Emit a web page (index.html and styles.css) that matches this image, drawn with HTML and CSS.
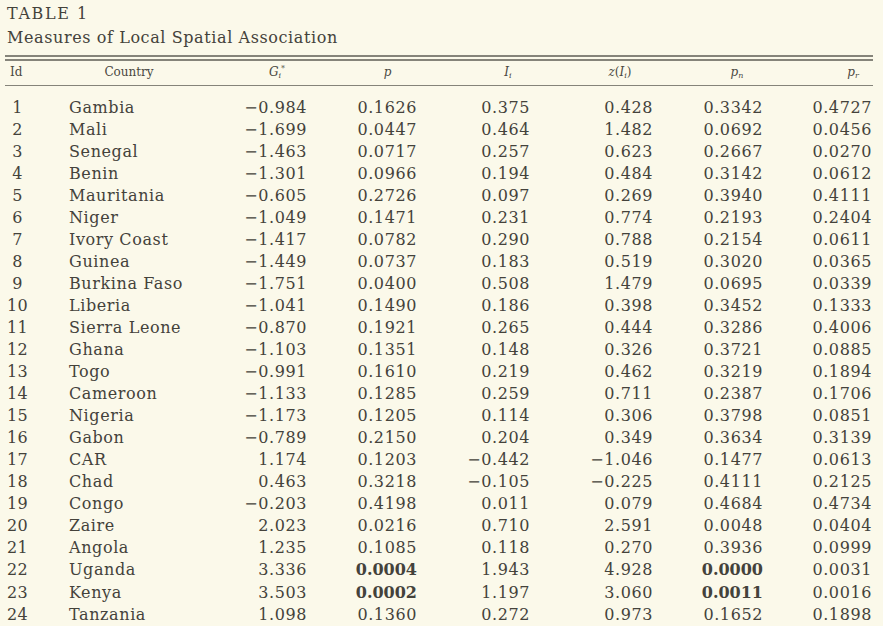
FILE: index.html
```html
<!DOCTYPE html>
<html lang="en">
<head>
<meta charset="utf-8">
<title>Table 1 – Measures of Local Spatial Association</title>
<link rel="stylesheet" href="styles.css">
</head>
<body>
<div class="page">
  <div class="caption">
    <div class="label">TABLE 1</div>
    <div class="title">Measures of Local Spatial Association</div>
  </div>
  <table class="data">
    <colgroup>
      <col class="c-id"><col class="c-country"><col class="c-g"><col class="c-p">
      <col class="c-i"><col class="c-z"><col class="c-pn"><col class="c-pr">
    </colgroup>
    <thead>
      <tr>
        <th class="h-id">Id</th>
        <th class="h-country">Country</th>
        <th class="h-g"><i>G</i><sub><i>i</i></sub><sup class="star">*</sup></th>
        <th class="h-p"><i>p</i></th>
        <th class="h-i"><i>I</i><sub><i>i</i></sub></th>
        <th class="h-z"><i>z</i>(<i>I</i><sub><i>i</i></sub>)</th>
        <th class="h-pn"><i>p</i><sub><i>n</i></sub></th>
        <th class="h-pr"><i>p</i><sub><i>r</i></sub></th>
      </tr>
    </thead>
    <tbody>
      <tr><td>1</td><td>Gambia</td><td>−0.984</td><td>0.1626</td><td>0.375</td><td>0.428</td><td>0.3342</td><td>0.4727</td></tr>
      <tr><td>2</td><td>Mali</td><td>−1.699</td><td>0.0447</td><td>0.464</td><td>1.482</td><td>0.0692</td><td>0.0456</td></tr>
      <tr><td>3</td><td>Senegal</td><td>−1.463</td><td>0.0717</td><td>0.257</td><td>0.623</td><td>0.2667</td><td>0.0270</td></tr>
      <tr><td>4</td><td>Benin</td><td>−1.301</td><td>0.0966</td><td>0.194</td><td>0.484</td><td>0.3142</td><td>0.0612</td></tr>
      <tr><td>5</td><td>Mauritania</td><td>−0.605</td><td>0.2726</td><td>0.097</td><td>0.269</td><td>0.3940</td><td>0.4111</td></tr>
      <tr><td>6</td><td>Niger</td><td>−1.049</td><td>0.1471</td><td>0.231</td><td>0.774</td><td>0.2193</td><td>0.2404</td></tr>
      <tr><td>7</td><td>Ivory Coast</td><td>−1.417</td><td>0.0782</td><td>0.290</td><td>0.788</td><td>0.2154</td><td>0.0611</td></tr>
      <tr><td>8</td><td>Guinea</td><td>−1.449</td><td>0.0737</td><td>0.183</td><td>0.519</td><td>0.3020</td><td>0.0365</td></tr>
      <tr><td>9</td><td>Burkina Faso</td><td>−1.751</td><td>0.0400</td><td>0.508</td><td>1.479</td><td>0.0695</td><td>0.0339</td></tr>
      <tr><td>10</td><td>Liberia</td><td>−1.041</td><td>0.1490</td><td>0.186</td><td>0.398</td><td>0.3452</td><td>0.1333</td></tr>
      <tr><td>11</td><td>Sierra Leone</td><td>−0.870</td><td>0.1921</td><td>0.265</td><td>0.444</td><td>0.3286</td><td>0.4006</td></tr>
      <tr><td>12</td><td>Ghana</td><td>−1.103</td><td>0.1351</td><td>0.148</td><td>0.326</td><td>0.3721</td><td>0.0885</td></tr>
      <tr><td>13</td><td>Togo</td><td>−0.991</td><td>0.1610</td><td>0.219</td><td>0.462</td><td>0.3219</td><td>0.1894</td></tr>
      <tr><td>14</td><td>Cameroon</td><td>−1.133</td><td>0.1285</td><td>0.259</td><td>0.711</td><td>0.2387</td><td>0.1706</td></tr>
      <tr><td>15</td><td>Nigeria</td><td>−1.173</td><td>0.1205</td><td>0.114</td><td>0.306</td><td>0.3798</td><td>0.0851</td></tr>
      <tr><td>16</td><td>Gabon</td><td>−0.789</td><td>0.2150</td><td>0.204</td><td>0.349</td><td>0.3634</td><td>0.3139</td></tr>
      <tr><td>17</td><td>CAR</td><td>1.174</td><td>0.1203</td><td>−0.442</td><td>−1.046</td><td>0.1477</td><td>0.0613</td></tr>
      <tr><td>18</td><td>Chad</td><td>0.463</td><td>0.3218</td><td>−0.105</td><td>−0.225</td><td>0.4111</td><td>0.2125</td></tr>
      <tr><td>19</td><td>Congo</td><td>−0.203</td><td>0.4198</td><td>0.011</td><td>0.079</td><td>0.4684</td><td>0.4734</td></tr>
      <tr><td>20</td><td>Zaire</td><td>2.023</td><td>0.0216</td><td>0.710</td><td>2.591</td><td>0.0048</td><td>0.0404</td></tr>
      <tr><td>21</td><td>Angola</td><td>1.235</td><td>0.1085</td><td>0.118</td><td>0.270</td><td>0.3936</td><td>0.0999</td></tr>
      <tr><td>22</td><td>Uganda</td><td>3.336</td><td class="sig">0.0004</td><td>1.943</td><td>4.928</td><td class="sig">0.0000</td><td>0.0031</td></tr>
      <tr><td>23</td><td>Kenya</td><td>3.503</td><td class="sig">0.0002</td><td>1.197</td><td>3.060</td><td class="sig">0.0011</td><td>0.0016</td></tr>
      <tr><td>24</td><td>Tanzania</td><td>1.098</td><td>0.1360</td><td>0.272</td><td>0.973</td><td>0.1652</td><td>0.1898</td></tr>
    </tbody>
  </table>
</div>
</body>
</html>
```

FILE: styles.css
```css
html, body {
  margin: 0;
  padding: 0;
  background: #fbf9ea;
}

.page {
  width: 883px;
  height: 626px;
  overflow: hidden;
  color: #44423b;
  font-family: "DejaVu Serif", "Liberation Serif", serif;
}

.caption {
  padding: 1.5px 0 0 7px;
}

.label {
  font-size: 16px;
  line-height: 24px;
  letter-spacing: 1.6px;
}

.title {
  font-size: 16px;
  line-height: 24px;
  letter-spacing: 0.6px;
}

.data {
  margin: 5px 0 0 5px;
  width: 868px;
  table-layout: fixed;
  border-collapse: collapse;
  border-top: 6px double #85847a;
}

.c-id { width: 25px; }
.c-country { width: 170px; }
.c-g { width: 107px; }
.c-p { width: 110px; }
.c-i { width: 113px; }
.c-z { width: 123px; }
.c-pn { width: 110px; }
.c-pr { width: 110px; }

.data thead tr {
  border-bottom: 1.5px solid #85847a;
}

.data th {
  font-weight: normal;
  font-size: 12px;
  line-height: 14px;
  height: 20px;
  padding: 4px 0 0 0;
  vertical-align: top;
  text-align: center;
  white-space: nowrap;
  color: #4a4841;
}

.data th sub,
.data th sup {
  font-size: 8px;
  line-height: 0;
}

.data th sub {
  vertical-align: -2px;
}

.data th sup.star {
  vertical-align: 5px;
  font-style: normal;
}

.h-id { text-align: left !important; padding-left: 5px !important; }
.h-country { padding-left: 28px !important; }
.h-g { padding-left: 47px !important; }
.h-p { padding-left: 51px !important; }
.h-i { padding-left: 69px !important; }
.h-z { padding-left: 57px !important; }
.h-pn { padding-left: 58px !important; }
.h-pr { padding-left: 70px !important; }

.data td {
  font-size: 16px;
  line-height: 22.05px;
  padding: 0;
  letter-spacing: 0.6px;
  white-space: nowrap;
  text-align: right;
}

.data tbody tr:first-child td {
  padding-top: 11px;
}

.data td:nth-child(1) {
  text-align: center;
  letter-spacing: 0.3px;
}

.data td:nth-child(2) {
  text-align: left;
  padding-left: 39px;
}

.data td:nth-child(8) {
  padding-right: 1px;
}

.data td.sig {
  font-weight: bold;
  letter-spacing: 0;
}
```
